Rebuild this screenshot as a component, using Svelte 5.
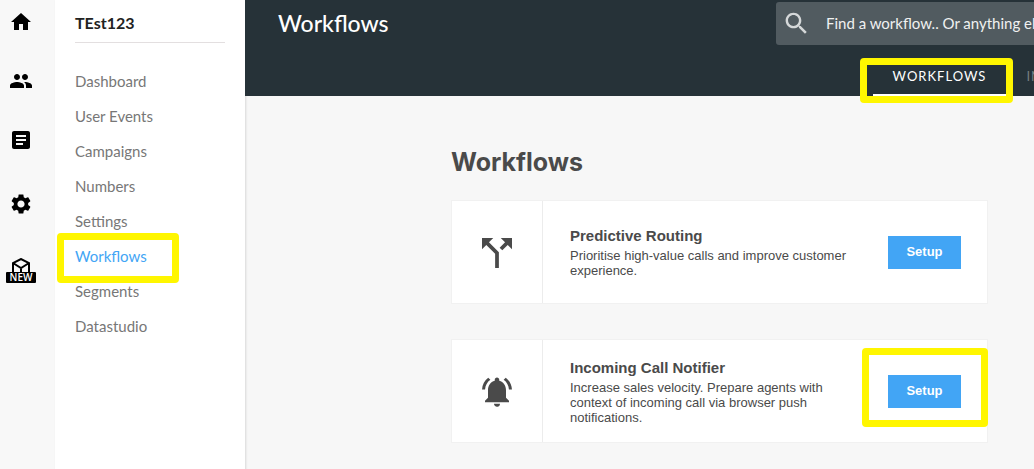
<!-- Workflows page: icon rail, project menu, header and workflow cards -->
<script>
	const menu = [
		'Dashboard',
		'User Events',
		'Campaigns',
		'Numbers',
		'Settings',
		'Workflows',
		'Segments',
		'Datastudio'
	];
	const active = 'Workflows';

	// Main rail icons, 24px grid
	const railIcons = [
		{ label: 'Home', path: 'M10 20v-6h4v6h5v-8h3L12 3 2 12h3v8z' },
		{
			label: 'Users',
			path: 'M16 11c1.66 0 2.99-1.34 2.99-3S17.66 5 16 5c-1.66 0-3 1.34-3 3s1.34 3 3 3zm-8 0c1.66 0 2.99-1.34 2.99-3S9.66 5 8 5C6.34 5 5 6.34 5 8s1.34 3 3 3zm0 2c-2.33 0-7 1.17-7 3.5V19h14v-2.5c0-2.33-4.67-3.5-7-3.5zm8 0c-.29 0-.62.02-.97.05 1.16.84 1.97 1.97 1.97 3.45V19h6v-2.5c0-2.33-4.67-3.5-7-3.5z'
		},
		{
			label: 'Reports',
			path: 'M19 3H5c-1.1 0-2 .9-2 2v14c0 1.1.9 2 2 2h14c1.1 0 2-.9 2-2V5c0-1.1-.9-2-2-2zm-5 14H7v-2h7v2zm3-4H7v-2h10v2zm0-4H7V7h10v2z'
		}
	];

	const workflows = [
		{
			title: 'Predictive Routing',
			description: 'Prioritise high-value calls and improve customer experience.',
			viewBox: '2.4 1.9 19.2 19.2',
			path: 'M14 4l2.29 2.29-2.88 2.88 1.42 1.42 2.88-2.88L20 10V4zm-4 0H4v6l2.29-2.29 4.71 4.7V20h2v-8.41l-5.29-5.3z',
			highlighted: false
		},
		{
			title: 'Incoming Call Notifier',
			description:
				'Increase sales velocity. Prepare agents with context of incoming call via browser push notifications.',
			viewBox: '0 -0.5 24 24',
			path: 'M7.58 4.08L6.15 2.65C3.75 4.48 2.17 7.3 2.03 10.5h2c.15-2.65 1.51-4.97 3.55-6.42zm12.39 6.42h2c-.15-3.2-1.73-6.02-4.12-7.85l-1.42 1.43c2.02 1.45 3.39 3.77 3.54 6.42zM18 11c0-3.07-1.64-5.64-4.5-6.32V4c0-.83-.67-1.5-1.5-1.5s-1.5.67-1.5 1.5v.68C7.63 5.36 6 7.92 6 11v5l-2 2v1h16v-1l-2-2v-5zm-6 11c.14 0 .27-.01.4-.04.65-.14 1.18-.58 1.44-1.18.1-.24.15-.5.15-.78h-4c.01 1.1.9 2 2.01 2z',
			highlighted: true
		}
	];
</script>

<div class="page">
	<nav class="rail" aria-label="Main">
		<ul>
			{#each railIcons as icon}
				<li>
					<a href="#{icon.label.toLowerCase()}" aria-label={icon.label}>
						<svg width="24" height="24" viewBox="0 0 24 24"><path d={icon.path} /></svg>
					</a>
				</li>
			{/each}
		</ul>
		<ul class="extra">
			<li>
				<a href="#preferences" aria-label="Preferences">
					<svg width="24" height="24" viewBox="0 0 24 24">
						<path
							d="M19.14 12.94c.04-.3.06-.61.06-.94 0-.32-.02-.64-.07-.94l2.03-1.58c.18-.14.23-.41.12-.61l-1.92-3.32c-.12-.22-.37-.29-.59-.22l-2.39.96c-.5-.38-1.03-.7-1.62-.94l-.36-2.54c-.04-.24-.24-.41-.48-.41h-3.84c-.24 0-.43.17-.47.41l-.36 2.54c-.59.24-1.13.57-1.62.94l-2.39-.96c-.22-.08-.47 0-.59.22L2.74 8.87c-.12.21-.08.47.12.61l2.03 1.58c-.05.3-.09.63-.09.94s.02.64.07.94l-2.03 1.58c-.18.14-.23.41-.12.61l1.92 3.32c.12.22.37.29.59.22l2.39-.96c.5.38 1.03.7 1.62.94l.36 2.54c.05.24.24.41.48.41h3.84c.24 0 .44-.17.47-.41l.36-2.54c.59-.24 1.13-.56 1.62-.94l2.39.96c.22.08.47 0 .59-.22l1.92-3.32c.12-.22.07-.47-.12-.61l-2.01-1.58zM12 15.6c-1.98 0-3.6-1.62-3.6-3.6s1.62-3.6 3.6-3.6 3.6 1.62 3.6 3.6-1.62 3.6-3.6 3.6z"
						/>
					</svg>
				</a>
			</li>
			<li>
				<a class="new" href="#new">
					<svg width="20" height="14" viewBox="0 0 20 14">
						<path class="line" d="M2 15V5L10 1L18 5V15M2 5L10 10L18 5M10 10V15" />
					</svg>
					<span>NEW</span>
				</a>
			</li>
		</ul>
	</nav>

	<aside class="sidebar">
		<h2>TEst123</h2>
		<nav aria-label="Project">
			{#each menu as item}
				<a href="#{item.toLowerCase().replace(' ', '-')}" class:active={item === active}>
					{item}
					{#if item === active}
						<span class="marker"></span>
					{/if}
				</a>
			{/each}
		</nav>
	</aside>

	<div class="main">
		<header>
			<div class="top">
				<h1>Workflows</h1>
				<label class="search">
					<svg width="29" height="29" viewBox="0 0 24 24">
						<path
							d="M15.5 14h-.79l-.28-.27C15.41 12.59 16 11.11 16 9.5 16 5.91 13.09 3 9.5 3S3 5.91 3 9.5 5.91 16 9.5 16c1.61 0 3.09-.59 4.23-1.57l.27.28v.79l5 4.99L20.49 19l-4.99-5zm-6 0C7.01 14 5 11.99 5 9.5S7.01 5 9.5 5 14 7.01 14 9.5 11.99 14 9.5 14z"
						/>
					</svg>
					<input type="search" aria-label="Search" placeholder="Find a workflow.. Or anything else" />
				</label>
			</div>
			<nav class="tabs" aria-label="Sections">
				<a class="current" href="#workflows">
					WORKFLOWS
					<span class="marker"></span>
				</a>
				<a href="#in">IN</a>
			</nav>
		</header>

		<main>
			<h2>Workflows</h2>
			{#each workflows as workflow}
				<article class="card">
					<div class="icon">
						<svg width="36" height="36" viewBox={workflow.viewBox}><path d={workflow.path} /></svg>
					</div>
					<div class="text">
						<h3>{workflow.title}</h3>
						<p>{workflow.description}</p>
					</div>
					<div class="action">
						<button type="button">Setup</button>
						{#if workflow.highlighted}
							<span class="marker"></span>
						{/if}
					</div>
				</article>
			{/each}
		</main>
	</div>
</div>

<style>
	:global(body) {
		background: #f7f7f7;
	}

	.page {
		display: flex;
		min-height: 100vh;
		overflow: hidden;
		font-family: 'Lato', sans-serif;
	}

	h1,
	h2,
	h3,
	p,
	ul {
		margin: 0;
		padding: 0;
	}

	a {
		text-decoration: none;
	}

	svg {
		display: block;
		fill: currentColor;
	}

	/* Yellow call-out frame */
	.marker {
		position: absolute;
		border: 7px solid #fff600;
		border-radius: 4px;
		box-sizing: border-box;
		pointer-events: none;
		z-index: 2;
	}

	/* Icon rail */
	.rail {
		flex: none;
		width: 55px;
		box-sizing: border-box;
		padding: 10px 0 0 9px;
		background: #f8f8f8;
	}
	.rail ul {
		list-style: none;
		display: grid;
		gap: 35px;
	}
	.rail .extra {
		margin-top: 40px;
		gap: 42px;
	}
	.rail a {
		display: block;
		width: 24px;
		color: #000;
	}
	.rail .new {
		display: flex;
		flex-direction: column;
		align-items: center;
	}
	.line {
		fill: none;
		stroke: #000;
		stroke-width: 2;
	}
	.new span {
		flex: none;
		background: #000;
		color: #fff;
		border-radius: 1px;
		width: 30px;
		font: 600 10px/11px 'Open Sans', sans-serif;
		text-align: center;
	}

	/* Project menu */
	.sidebar {
		flex: none;
		width: 190px;
		box-sizing: border-box;
		padding: 4px 20px 0;
		background: #fff;
		box-shadow: 1px 0 2px rgba(0, 0, 0, 0.12);
	}
	.sidebar h2 {
		border-bottom: 1px solid #e3dfe0;
		color: #222;
		font-size: 16px;
		line-height: 38px;
		margin-bottom: 21px;
	}
	.sidebar a {
		display: block;
		position: relative;
		color: #777;
		font-size: 15px;
		line-height: 35px;
	}
	.sidebar a.active {
		color: #42a5f5;
	}
	.sidebar .marker {
		inset: -6px 46px -9px -18px;
	}

	/* Header */
	.main {
		flex: 1;
		min-width: 0;
	}
	header {
		background: #263238;
		height: 96px;
	}
	.top {
		display: flex;
		justify-content: space-between;
		padding: 2px 0 0 33px;
		margin-right: -40px;
	}
	h1 {
		color: #fff;
		font-size: 23px;
		font-weight: 500;
		line-height: 43px;
	}
	.search {
		display: flex;
		align-items: center;
		width: 298px;
		height: 43px;
		box-sizing: border-box;
		padding-left: 6px;
		gap: 15px;
		border-radius: 3px;
		background: #515b60;
		color: #d5d8d9;
	}
	.search svg {
		flex: none;
	}
	.search input {
		flex: 1;
		min-width: 0;
		padding: 0 0 2px;
		border: 0;
		outline: none;
		background: none;
		color: #fff;
		font: 15px 'Lato', sans-serif;
	}
	.search input::placeholder {
		color: #f0f1f1;
	}
	.tabs {
		display: flex;
		justify-content: flex-end;
		margin-right: -28px;
	}
	.tabs a {
		position: relative;
		padding: 0 20px;
		height: 51px;
		box-sizing: border-box;
		border-bottom: 2px solid transparent;
		color: #777e80;
		font-size: 13px;
		line-height: 63px;
		letter-spacing: 1px;
	}
	.tabs .current {
		border-color: #fff;
		color: #fff;
	}
	.tabs .marker {
		inset: 13px -7px -9px -13px;
	}

	/* Cards */
	main {
		max-width: 537px;
		padding: 48px 45px 0 206px;
		color: #4a4a4a;
	}
	main h2 {
		font: bold 25px/36px 'Inter', sans-serif;
		margin-bottom: 20px;
	}
	.card {
		display: flex;
		min-height: 102px;
		margin-bottom: 35px;
		background: #fff;
		border: 1px solid #f1f1f1;
		font-family: 'Liberation Sans', sans-serif;
	}
	.icon {
		flex: none;
		width: 90px;
		display: grid;
		place-items: center;
		border-right: 1px solid #ececec;
	}
	.text {
		flex: 1;
		align-self: center;
		padding: 0 24px 0 27px;
	}
	h3 {
		font-size: 15px;
		line-height: 20px;
		margin-bottom: 2px;
	}
	p {
		font-size: 13px;
		line-height: 15px;
	}
	.action {
		position: relative;
		align-self: center;
		margin-right: 26px;
	}
	button {
		display: block;
		width: 73px;
		height: 33px;
		padding: 0 0 2px;
		border: 0;
		background: #42a5f5;
		color: #fff;
		font: bold 13px 'Liberation Sans', sans-serif;
		cursor: pointer;
	}
	.action .marker {
		inset: -27px -27px -19px -26px;
	}
</style>
